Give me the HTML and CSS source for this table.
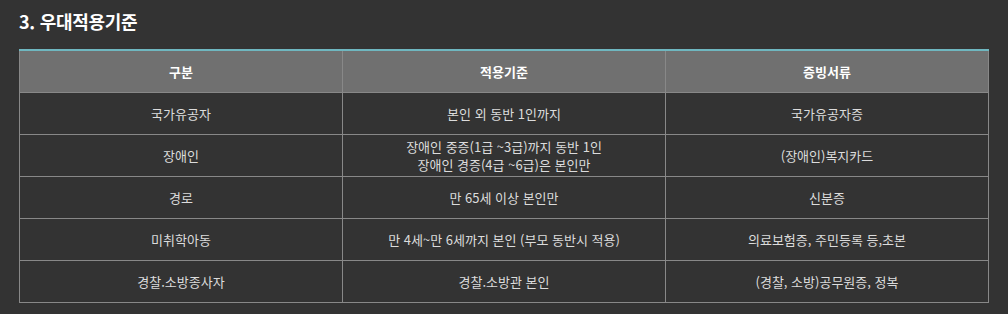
FILE: index.html
```html
<!DOCTYPE html>
<html lang="ko">
<head>
<meta charset="utf-8">
<link rel="stylesheet" href="styles.css">
</head>
<body>
<div class="page">
  <h2 class="title">3. 우대적용기준</h2>
  <table class="tbl">
    <thead>
      <tr><th>구분</th><th>적용기준</th><th>증빙서류</th></tr>
    </thead>
    <tbody>
      <tr><td>국가유공자</td><td>본인 외 동반 1인까지</td><td>국가유공자증</td></tr>
      <tr><td>장애인</td><td>장애인 중증(1급 ~3급)까지 동반 1인<br>장애인 경증(4급 ~6급)은 본인만</td><td>(장애인)복지카드</td></tr>
      <tr><td>경로</td><td>만 65세 이상 본인만</td><td>신분증</td></tr>
      <tr><td>미취학아동</td><td>만 4세~만 6세까지 본인 (부모 동반시 적용)</td><td>의료보험증, 주민등록 등,초본</td></tr>
      <tr><td>경찰.소방종사자</td><td>경찰.소방관 본인</td><td>(경찰, 소방)공무원증, 정복</td></tr>
    </tbody>
  </table>
</div>
</body>
</html>
```
FILE: styles.css
```css
html, body {
  margin: 0;
  padding: 0;
  background: #333333;
}
body {
  font-family: "Noto Sans CJK KR", "Noto Sans", sans-serif;
  color: #dcdcdc;
}
.page {
  padding: 8px 19px 0 19px;
}
.title {
  margin: 0;
  font-size: 18px;
  line-height: 26px;
  font-weight: 700;
  color: #ffffff;
  letter-spacing: -0.3px;
}
.tbl {
  margin-top: 15px;
  width: 970px;
  border-collapse: collapse;
  border-top: 2px solid #6fb7c0;
  table-layout: fixed;
  font-size: 13px;
}
.tbl th {
  background: #707070;
  color: #ffffff;
  font-weight: 700;
  height: 41px;
  padding: 0;
  border-left: 1px solid #888888;
  border-right: 1px solid #888888;
  text-align: center;
  vertical-align: middle;
}
.tbl td {
  height: 41px;
  padding: 0;
  border: 1px solid #888888;
  text-align: center;
  vertical-align: middle;
  line-height: 18px;
}
```
